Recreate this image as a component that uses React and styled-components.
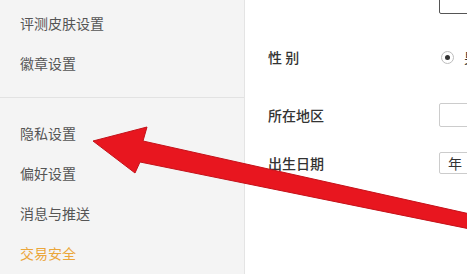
import React from 'react';
import styled, { createGlobalStyle } from 'styled-components';

const GlobalStyle = createGlobalStyle`
  html, body {
    margin: 0;
    padding: 0;
    background: #ffffff;
    overflow: hidden;
  }
  body {
    font-family: "Noto Sans CJK SC", "Noto Sans", sans-serif;
  }
`;

const Page = styled.div`
  position: relative;
  display: flex;
  width: 467px;
  height: 274px;
  overflow: hidden;
`;

const Sidebar = styled.nav`
  width: 245px;
  flex-shrink: 0;
  background: #f4f4f4;
  border-right: 1px solid #e4e4e4;
  padding-top: 3px;
  box-sizing: border-box;
`;

const MenuItem = styled.div`
  height: 40px;
  display: flex;
  align-items: center;
  padding-left: 20px;
  font-size: 14px;
  color: ${(p) => (p.$active ? '#eba63a' : '#555555')};
`;

const Divider = styled.div`
  height: 1px;
  background: #e2e2e2;
  margin: 14px 0 15px;
`;

const Content = styled.main`
  flex: 1;
  display: flex;
  flex-direction: column;
  padding-left: 23px;
  background: #ffffff;
`;

const FormRow = styled.div`
  display: flex;
  align-items: center;
  height: ${(p) => p.$h}px;
  margin-top: ${(p) => p.$mt}px;
`;

const Label = styled.div`
  width: 171px;
  flex-shrink: 0;
  font-size: 14px;
  font-weight: 500;
  color: #333333;
  white-space: nowrap;
`;

const TextBox = styled.div`
  width: 60px;
  height: ${(p) => p.$h}px;
  box-sizing: border-box;
  border: 1px solid ${(p) => (p.$dark ? '#555555' : '#cccccc')};
  border-radius: 2px;
  background: #fff;
  font-size: 14px;
  color: #333;
  display: flex;
  align-items: center;
  padding-left: 8px;
`;

const RadioGroup = styled.div`
  display: flex;
  align-items: center;
  gap: 10px;
  padding-left: 2px;
  font-size: 14px;
  color: #333;
  white-space: nowrap;
`;

const RadioDot = styled.span`
  width: 13px;
  height: 13px;
  border-radius: 50%;
  border: 1px solid #bdbdbd;
  box-sizing: border-box;
  display: flex;
  align-items: center;
  justify-content: center;
  &::after {
    content: '';
    width: 5px;
    height: 5px;
    border-radius: 50%;
    background: #333;
  }
`;

const Overlay = styled.svg`
  position: absolute;
  left: 0;
  top: 0;
  pointer-events: none;
`;

const menuTop = ['评测皮肤设置', '徽章设置'];
const menuBottom = ['隐私设置', '偏好设置', '消息与推送'];

export default function App() {
  return (
    <>
      <GlobalStyle />
      <Page>
        <Sidebar>
          {menuTop.map((m) => (
            <MenuItem key={m}>{m}</MenuItem>
          ))}
          <Divider />
          {menuBottom.map((m) => (
            <MenuItem key={m}>{m}</MenuItem>
          ))}
          <MenuItem $active>交易安全</MenuItem>
        </Sidebar>
        <Content>
          <FormRow $h={24} $mt={-10}>
            <Label />
            <TextBox $h={24} $dark />
          </FormRow>
          <FormRow $h={24} $mt={31}>
            <Label>性 别</Label>
            <RadioGroup>
              <RadioDot />
              男
            </RadioGroup>
          </FormRow>
          <FormRow $h={24} $mt={34}>
            <Label>所在地区</Label>
            <TextBox $h={24} />
          </FormRow>
          <FormRow $h={22} $mt={25}>
            <Label>出生日期</Label>
            <TextBox $h={22}>年</TextBox>
          </FormRow>
        </Content>
        <Overlay width="467" height="274" viewBox="0 0 467 274">
          <polygon
            points="93,141 147,127 143,141 470,214 470,229 140,162 135,173"
            fill="#e8161f"
            stroke="#c4121a"
            strokeWidth="1"
            strokeLinejoin="round"
          />
        </Overlay>
      </Page>
    </>
  );
}
